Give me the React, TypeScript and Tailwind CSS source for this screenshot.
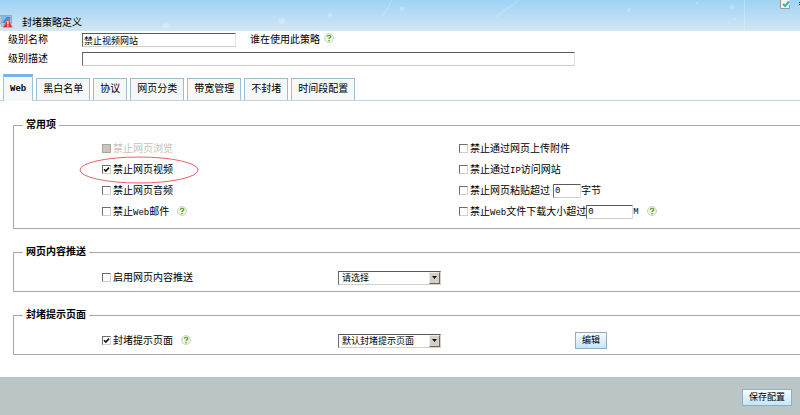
import { useState } from 'react'
import type { ReactNode } from 'react'

const TABS = ['Web', '黑白名单', '协议', '网页分类', '带宽管理', '不封堵', '时间段配置']

const INPUT =
  'border border-t-[#5a5a5a] border-l-[#6a6a6a] border-r-[#e2dfd8] border-b-[#d0cdc4] bg-white pl-px text-[9px] leading-[11px] outline-none'

function HelpIcon() {
  return (
    <button type="button" title="帮助" className="shrink-0">
      <svg width="10" height="10" viewBox="0 0 10 10" fill="none" className="block">
        <circle cx="5" cy="5" r="4.5" fill="#edf3ea" stroke="#c3cdbf" strokeWidth="0.8" />
        <path d="M3.3 3.8C3.4 1.9 6.7 1.9 6.7 3.7C6.7 4.9 5 4.8 5 6.1" stroke="#5fae2c" strokeWidth="1.4" />
        <path d="M4.3 7h1.4v1.3H4.3z" fill="#4c9d22" />
      </svg>
    </button>
  )
}

interface CheckProps {
  id: string
  children: ReactNode
  checked?: boolean
  disabled?: boolean
}

function Check({ id, children, checked, disabled }: CheckProps) {
  return (
    <label htmlFor={id} className={`flex items-center gap-[2px] ${disabled ? 'text-[#c4c1ba]' : ''}`}>
      <span className="grid">
        <input
          id={id}
          type="checkbox"
          defaultChecked={checked}
          disabled={disabled}
          className="peer col-start-1 row-start-1 size-[9px] appearance-none border border-t-[#6f6f6f] border-l-[#6f6f6f] border-r-[#d4d0c8] border-b-[#d4d0c8] bg-white disabled:border-[#aaa69e] disabled:bg-[#c9c5bd]"
        />
        <svg
          viewBox="0 0 9 9"
          fill="none"
          className="pointer-events-none invisible col-start-1 row-start-1 size-[9px] peer-checked:visible"
        >
          <path d="M2 4.2L3.8 6L7 2.6" stroke="#111" strokeWidth="1.6" />
        </svg>
      </span>
      <span className="pt-[2px]">{children}</span>
    </label>
  )
}

function Latin({ children }: { children: ReactNode }) {
  return <span className="text-[9px]">{children}</span>
}

function Dropdown({ label, options }: { label: string; options: string[] }) {
  return (
    <div className="grid w-[103px]">
      <select
        aria-label={label}
        className="col-start-1 row-start-1 h-[14px] w-full appearance-none border border-t-[#5a5a5a] border-l-[#6a6a6a] border-r-[#d4d0c8] border-b-[#d4d0c8] bg-white pt-px pl-[3px] text-[9px] leading-[12px] outline-none"
      >
        {options.map((option) => (
          <option key={option}>{option}</option>
        ))}
      </select>
      <span className="pointer-events-none col-start-1 row-start-1 mr-px flex h-[12px] w-[11px] items-center justify-center self-center justify-self-end border border-t-[#eeece6] border-l-[#eeece6] border-r-[#68665f] border-b-[#68665f] bg-[#d4d0c8]">
        <svg width="5" height="3" viewBox="0 0 5 3">
          <path d="M0 0h5L2.5 3z" fill="#111" />
        </svg>
      </span>
    </div>
  )
}

function ActionButton({ children }: { children: ReactNode }) {
  return (
    <button
      type="button"
      className="h-[17px] border border-[#93aebb] bg-linear-to-b from-[#f8fcfe] to-[#c2e7fb] px-[6px] pt-px text-[9px] leading-[14px]"
    >
      {children}
    </button>
  )
}

function Section({ title, children }: { title: string; children: ReactNode }) {
  return (
    <fieldset className="ml-[13px] min-w-0 border border-r-0 border-[#a9a9a4] pl-[88px]">
      <legend className="-ml-[79px] px-[3px] pt-[2px] leading-[14px] font-bold">{title}</legend>
      {children}
    </fieldset>
  )
}

function Header() {
  return (
    <header className="relative flex h-[31px] items-end overflow-hidden bg-linear-to-b from-[#9dd3f5] to-[#d3e6f3]">
      {/* light streaks and specks behind the title */}
      <svg className="absolute inset-0 h-full w-full" viewBox="0 0 800 31" preserveAspectRatio="none" fill="none">
        <path d="M496 17L519 0M383 16L392 0" stroke="#fff" strokeOpacity="0.25" />
        <path d="M744.5 0V31" stroke="#fff" strokeOpacity="0.25" />
        <g fill="#fff" fillOpacity="0.25">
          <circle cx="330" cy="15" r="2" />
          <circle cx="282" cy="21" r="3" />
          <circle cx="166" cy="26" r="3" />
          <circle cx="402" cy="9" r="2" />
          <circle cx="629" cy="10" r="2" />
          <circle cx="732" cy="7" r="2" />
          <circle cx="697" cy="3" r="1" />
          <circle cx="735" cy="19" r="1" />
        </g>
      </svg>
      <svg width="13" height="13" viewBox="0 0 13 13" className="relative mb-[3px]">
        <path d="M0 .5h11.5V9H0z" fill="#d5dde3" stroke="#8d9aa5" strokeWidth="0.8" />
        <path d="M1 1.5h9.5V8H1z" fill="#3f8edb" />
        <path d="M1 1.5h6L2 8H1z" fill="#7fbdf0" />
        <path d="M1 10h5v2H1z" fill="#b4bcc2" />
        <path d="M7.8 3.5L12.6 12.5H3z" fill="#dc3038" stroke="#f2a0a0" strokeWidth="0.5" />
        <path d="M7.2 6h1.3v3.5H7.2zM7.2 10.3h1.3v1.2H7.2z" fill="#fff" />
      </svg>
      <h1 className="relative ml-[9px] leading-[14px]">封堵策略定义</h1>
      <div className="relative ml-auto flex gap-[9px] self-start">
        <svg width="10" height="9" viewBox="0 0 10 9" fill="none">
          <path d="M.5 0H9.5V8.5H.5z" fill="#f0f3f4" />
          <path d="M.5 0V8.5H9.5V5" stroke="#9b9894" />
          <path d="M3 4L5 6L9 1.5" stroke="#2fb4b8" strokeWidth="2" />
        </svg>
        <svg width="1" height="9" viewBox="0 0 1 9">
          <path d="M0 2h1v1H0zM0 4h1v1H0z" fill="#234" />
        </svg>
      </div>
    </header>
  )
}

export default function App() {
  const [activeTab, setActiveTab] = useState('Web')

  return (
    <div className="flex min-h-screen flex-col bg-white font-['Liberation_Mono','Noto_Sans_CJK_SC',monospace] text-[10px] leading-[14px] whitespace-nowrap text-black">
      <Header />

      <div className="pl-[8px]">
        <div className="flex h-[18px] items-center">
          <label htmlFor="level-name" className="w-[74px] pt-[2px]">级别名称</label>
          <input id="level-name" defaultValue="禁止视频网站" className={`${INPUT} h-[14px] w-[154px]`} />
          <a href="#usage" className="ml-[14px] pt-[2px]">谁在使用此策略</a>
          <span className="ml-[4px]"><HelpIcon /></span>
        </div>
        <div className="flex h-[20px] items-center">
          <label htmlFor="level-desc" className="w-[74px] pt-[2px]">级别描述</label>
          <input id="level-desc" className={`${INPUT} h-[14px] w-[493px]`} />
        </div>
      </div>

      <nav role="tablist" className="mt-[5px] flex items-end gap-[3px] border-b border-[#bfd5e3] pl-[3px]">
        {TABS.map((tab) => (
          <button
            key={tab}
            type="button"
            role="tab"
            aria-selected={tab === activeTab}
            onClick={() => setActiveTab(tab)}
            className={
              tab === activeTab
                ? '-mb-px h-[27px] border-x border-t-3 border-x-[#a5c0d3] border-t-[#76b5ec] bg-[#f4f8f8] px-[6px] text-[9px] font-bold'
                : 'h-[22px] border border-b-0 border-[#9fbbd0] bg-[#f6f8f8] px-[6px] pt-px'
            }
          >
            {tab}
          </button>
        ))}
      </nav>

      <main className="mt-[16px] flex flex-col gap-[15px]">
        <Section title="常用项">
          <div className="grid grid-cols-[357fr_341fr] pt-[5px] pb-[6px]">
            <div className="grid auto-rows-[21px]">
              <Check id="browse" disabled>禁止网页浏览</Check>
              <div className="relative flex">
                <Check id="video" checked>禁止网页视频</Check>
                {/* red marker round the video option */}
                <svg
                  className="pointer-events-none absolute -top-[3px] -left-[23px]"
                  width="120"
                  height="28"
                  viewBox="0 0 120 28"
                  fill="none"
                >
                  <ellipse cx="60" cy="14" rx="59" ry="13" stroke="#e8606a" />
                </svg>
              </div>
              <Check id="audio">禁止网页音频</Check>
              <div className="flex items-center gap-[8px]">
                <Check id="mail">禁止<Latin>Web</Latin>邮件</Check>
                <span className="pt-[4px]"><HelpIcon /></span>
              </div>
            </div>
            <div className="grid auto-rows-[21px]">
              <Check id="upload">禁止通过网页上传附件</Check>
              <Check id="ip">禁止通过<Latin>IP</Latin>访问网站</Check>
              <div className="flex items-center">
                <Check id="paste">禁止网页粘贴超过</Check>
                <input aria-label="粘贴字节数" defaultValue="0" className={`${INPUT} ml-[3px] h-[14px] w-[28px]`} />
                <span className="pt-[2px]">字节</span>
              </div>
              <div className="flex items-center">
                <Check id="download">禁止<Latin>Web</Latin>文件下载大小超过</Check>
                <input aria-label="下载大小" defaultValue="0" className={`${INPUT} h-[14px] w-[47px]`} />
                <Latin>M</Latin>
                <span className="ml-[8px] pt-[4px]"><HelpIcon /></span>
              </div>
            </div>
          </div>
        </Section>

        <Section title="网页内容推送">
          <div className="grid grid-cols-[236fr_462fr] items-center pt-[7px] pb-[3px]">
            <Check id="push">启用网页内容推送</Check>
            <div className="flex h-[21px] items-center">
              <Dropdown label="推送内容" options={['请选择']} />
            </div>
          </div>
        </Section>

        <Section title="封堵提示页面">
          <div className="grid grid-cols-[236fr_237fr_225fr] items-center pt-[7px] pb-[3px]">
            <div className="flex items-center gap-[8px]">
              <Check id="notice" checked>封堵提示页面</Check>
              <span className="pt-[4px]"><HelpIcon /></span>
            </div>
            <Dropdown label="提示页面" options={['默认封堵提示页面']} />
            <div className="flex h-[21px] items-center">
              <ActionButton>编辑</ActionButton>
            </div>
          </div>
        </Section>
      </main>

      <footer className="mt-[22px] flex grow items-start justify-end bg-[#bac5c5] pt-[12px] pr-[8px] pb-[9px]">
        <ActionButton>保存配置</ActionButton>
      </footer>
    </div>
  )
}
